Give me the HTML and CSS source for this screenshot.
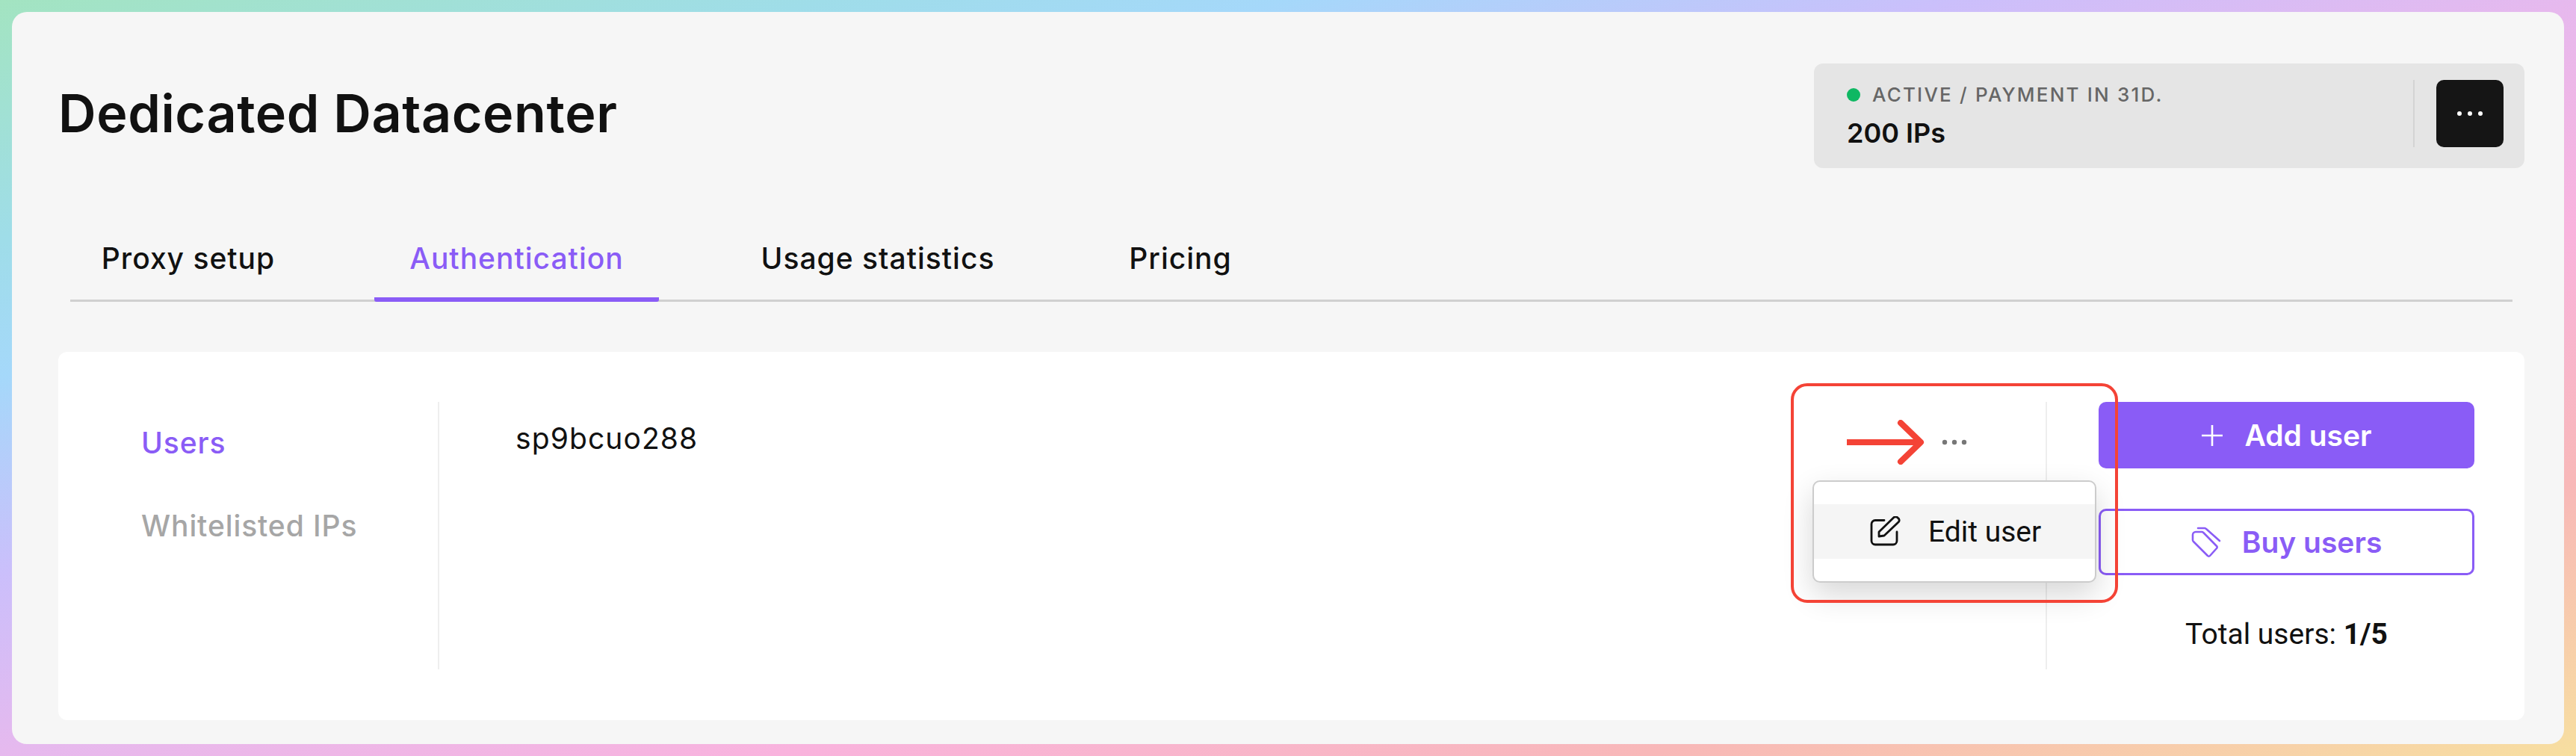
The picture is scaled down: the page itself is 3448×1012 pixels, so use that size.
FILE: index.html
```html
<!DOCTYPE html>
<html>
<head>
  <title>Dedicated Datacenter</title>
  <link rel="stylesheet" href="styles.css">
</head>
<body>
  <div class="panel">

    <div class="header">
      <h1 class="title">Dedicated Datacenter</h1>
      <div class="status">
        <div class="status-text">
          <div class="status-line"><span class="dot"></span>ACTIVE / PAYMENT IN 31D.</div>
          <div class="status-amount">200 IPs</div>
        </div>
        <div class="status-side">
          <button class="more-btn">
            <svg width="34" height="8" viewBox="0 0 34 8"><circle cx="3" cy="4" r="3" fill="#fff"/><circle cx="17" cy="4" r="3" fill="#fff"/><circle cx="31" cy="4" r="3" fill="#fff"/></svg>
          </button>
        </div>
      </div>
    </div>

    <div class="tabs">
      <div class="tab">Proxy setup</div>
      <div class="tab active">Authentication</div>
      <div class="tab">Usage statistics</div>
      <div class="tab">Pricing</div>
    </div>

    <div class="card">
      <div class="side-nav">
        <div class="side-link active">Users</div>
        <div class="side-link">Whitelisted IPs</div>
      </div>

      <div class="users">
        <div class="user-row">
          <span class="user-name">sp9bcuo288</span>
          <svg class="row-dots" width="34" height="8" viewBox="0 0 34 8"><circle cx="4" cy="4" r="3.2" fill="#777"/><circle cx="17" cy="4" r="3.2" fill="#777"/><circle cx="30" cy="4" r="3.2" fill="#777"/></svg>
        </div>

        <div class="menu">
          <div class="menu-item">
            <svg width="42" height="42" viewBox="0 0 42 42" fill="none" stroke="#111" stroke-width="2.800" stroke-linecap="round" stroke-linejoin="round">
              <path d="M19 5.500H7a5 5 0 0 0-5 5V33a5 5 0 0 0 5 5H31a5 5 0 0 0 5-5V21"/>
              <path d="M12 21 31 2.500a4 4 0 0 1 6.500 0 3.500 3.500 0 0 1 1 5L19 26l-7 1z"/>
            </svg>
            <span>Edit user</span>
          </div>
        </div>

        <div class="callout"></div>
        <svg class="arrow" width="104" height="60" viewBox="0 0 104 60" fill="none" stroke="#f44336" stroke-width="8">
          <path d="M0 30H99"/>
          <path d="M72 4 99 30 72 56" stroke-linecap="round" stroke-linejoin="round"/>
        </svg>
      </div>

      <div class="actions">
        <button class="btn btn-primary">
          <svg width="30" height="30" viewBox="0 0 30 30" stroke="#fff" stroke-width="2.600"><path d="M15 1V29M1 15H29"/></svg>
          <span>Add user</span>
        </button>
        <button class="btn btn-outline">
          <svg width="40" height="42" viewBox="0 0 40 42" fill="none" stroke="#8a5cf6" stroke-width="2.600" stroke-linejoin="round" stroke-linecap="round">
            <path d="M2 11a4 4 0 0 1 4-4H14a3 3 0 0 1 2.300 1L34 26a2 2 0 0 1 0 3L25 39a2 2 0 0 1-3 0L3 20a3 3 0 0 1-1-2z"/>
            <path d="M9 2H18a3 3 0 0 1 2 1L38 19"/>
          </svg>
          <span>Buy users</span>
        </button>
        <div class="total">Total users: <b>1/5</b></div>
      </div>
    </div>

  </div>
</body>
</html>
```

FILE: styles.css
```css
html, body {
  height: 100%;
}
body {
  margin: 0;
  padding: 16px;
  box-sizing: border-box;
  font-family: Inter, "Liberation Sans", sans-serif;
  background: linear-gradient(to bottom right, #a3e4c1 0%, #9fdde9 16%, #a5d8fa 25%, #cbbffb 38%, #e6b9ee 50%, #f9b3dd 65%, #f8b8b8 82%, #f7dfa0 100%);
}
.panel {
  height: 980px;
  background: #f6f6f6;
  border-radius: 20px;
  padding: 69px 53px 0 62px;
  box-sizing: border-box;
}

/* header */
.header {
  display: flex;
  justify-content: space-between;
  height: 140px;
}
.title {
  margin: 0;
  font-size: 70px;
  font-weight: 600;
  line-height: 1;
  color: #111;
  padding-top: 32px;
  letter-spacing: 0.6px;
}
.status {
  width: 951px;
  height: 140px;
  background: #e5e5e5;
  border-radius: 12px;
  display: flex;
  justify-content: space-between;
  align-items: center;
  padding: 0 28px 0 44px;
  box-sizing: border-box;
}
.status-line {
  display: flex;
  align-items: center;
  font-size: 26px;
  font-weight: 500;
  letter-spacing: 2.200px;
  color: #666;
  line-height: 30px;
}
.dot {
  width: 18px;
  height: 18px;
  background: #0fb863;
  border-radius: 50%;
  margin-right: 16px;
}
.status-amount {
  font-size: 36px;
  font-weight: 600;
  color: #111;
  margin-top: 15px;
  line-height: 42px;
}
.status-side {
  display: flex;
  padding-left: 29px;
  border-left: 2px solid #d4d4d4;
  margin-bottom: 6px;
}
.more-btn {
  width: 90px;
  height: 90px;
  background: #151515;
  border: none;
  border-radius: 10px;
  display: flex;
  align-items: center;
  justify-content: center;
}

/* tabs */
.tabs {
  display: grid;
  grid-template-columns: 316px 381px 404px 224px;
  gap: 91px;
  margin: 36px 16px 0 16px;
  height: 140px;
  align-items: end;
  border-bottom: 3px solid #d0d0d0;
}
.tab {
  padding-bottom: 27px;
  text-align: center;
  font-size: 39px;
  font-weight: 500;
  line-height: 50px;
  letter-spacing: 1px;
  color: #111;
  margin-bottom: -3px;
  border-bottom: 6px solid transparent;
  border-radius: 3px;
}
.tab.active {
  color: #8a5cf6;
  border-bottom-color: #8a5cf6;
}

/* card */
.card {
  display: flex;
  margin-top: 67px;
  height: 493px;
  background: #fff;
  border-radius: 12px;
  padding: 67px 0 68px;
  box-sizing: border-box;
}
.side-nav {
  width: 510px;
  box-sizing: border-box;
  padding-left: 111px;
  border-right: 2px solid #eee;
  flex-shrink: 0;
}
.side-link {
  font-size: 39px;
  font-weight: 500;
  line-height: 50px;
  letter-spacing: 0.9px;
  color: #a6a6a6;
  margin-top: 61px;
}
.side-link:first-child {
  margin-top: 30px;
}
.side-link.active {
  color: #8a5cf6;
}
.users {
  flex: 1;
  position: relative;
  padding: 23px 105px 0 102px;
  border-right: 2px solid #eee;
}
.user-row {
  display: flex;
  justify-content: space-between;
  align-items: center;
  height: 50px;
}
.user-name {
  font-size: 39px;
  letter-spacing: 1.100px;
  color: #111;
}
.row-dots {
  margin-top: 12px;
}

/* menu + annotation, these lie over the card */
.menu {
  position: absolute;
  top: 105px;
  left: 1838px;
  width: 380px;
  height: 137px;
  box-sizing: border-box;
  background: #fff;
  border: 2px solid #ccc;
  border-radius: 10px;
  padding-top: 30px;
  box-shadow: 0 16px 40px rgba(0, 0, 0, 0.16);
  z-index: 1;
}
.menu-item {
  display: flex;
  align-items: center;
  gap: 36px;
  height: 73px;
  padding-left: 75px;
  background: #f5f5f5;
  font-family: Roboto, sans-serif;
  font-size: 39px;
  color: #111;
}
.callout {
  position: absolute;
  top: -25px;
  left: 1809px;
  width: 438px;
  height: 294px;
  box-sizing: border-box;
  border: 4px solid #f44336;
  border-radius: 22px;
  z-index: 2;
}
.arrow {
  position: absolute;
  top: 24px;
  left: 1884px;
  z-index: 2;
}

/* right column */
.actions {
  width: 639px;
  flex-shrink: 0;
  box-sizing: border-box;
  padding: 0 67px 0 69px;
  display: flex;
  flex-direction: column;
  align-items: stretch;
}
.btn {
  height: 89px;
  border-radius: 10px;
  display: flex;
  align-items: center;
  justify-content: center;
  gap: 28px;
  font-family: Inter, sans-serif;
  font-size: 39px;
  font-weight: 600;
  padding: 0;
}
.btn-primary {
  background: #8a5cf6;
  color: #fff;
  border: none;
}
.btn-outline {
  margin-top: 54px;
  background: #fff;
  color: #8a5cf6;
  border: 3px solid #8a5cf6;
}
.total {
  margin-top: 54px;
  text-align: center;
  font-family: Roboto, sans-serif;
  font-size: 39px;
  color: #111;
  line-height: 50px;
}
.total b {
  font-weight: 700;
}
```
